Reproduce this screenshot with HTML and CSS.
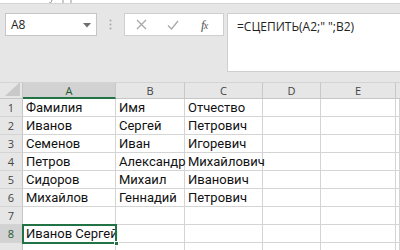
FILE: index.html
```html
<!DOCTYPE html>
<html lang="ru">
<head>
<meta charset="utf-8">
<link rel="stylesheet" href="styles.css">
</head>
<body>
<div class="ribbon-edge">
  <svg width="30" height="4" viewBox="0 0 30 4"><path d="M4 0 L3 2.5 Q2.5 3.2 1 3" stroke="#888" stroke-width="0.9" fill="none"/><path d="M15 0 V3" stroke="#888" stroke-width="0.9"/><path d="M23 0 V3" stroke="#888" stroke-width="0.9"/></svg>
</div>
<div class="formula-bar">
  <div class="namebox">
    <span class="name">A8</span>
    <svg class="caret" width="8" height="5" viewBox="0 0 8 5"><polygon points="0,0 8,0 4,4.5" fill="#6e6e6e"/></svg>
  </div>
  <div class="dots">
    <svg width="3" height="11" viewBox="0 0 3 11"><circle cx="1.5" cy="1.5" r="1" fill="#a8a8a8"/><circle cx="1.5" cy="5.5" r="1" fill="#a8a8a8"/><circle cx="1.5" cy="9.5" r="1" fill="#a8a8a8"/></svg>
  </div>
  <div class="fxbox">
    <svg class="ico" width="11" height="11" viewBox="0 0 11 11"><path d="M1 1 L10 10 M10 1 L1 10" stroke="#a9a9a9" stroke-width="1.3" fill="none"/></svg>
    <svg class="ico" width="12" height="10" viewBox="0 0 12 10"><path d="M1 5.5 L4.5 9 L11 1" stroke="#a9a9a9" stroke-width="1.3" fill="none"/></svg>
    <span class="fx"><i>f</i><i class="x">x</i></span>
  </div>
  <div class="formula">=СЦЕПИТЬ(A2;" ";B2)</div>
</div>
<div class="sheet">
  <div class="corner"><svg width="15" height="14" viewBox="0 0 15 14"><polygon points="15,0 15,14 0,14" fill="#c9c9c9"/></svg></div>
  <div class="ch sel">A</div><div class="ch">B</div><div class="ch">C</div><div class="ch">D</div><div class="ch">E</div><div class="ch last"></div>

  <div class="rh">1</div><div class="c">Фамилия</div><div class="c">Имя</div><div class="c">Отчество</div><div class="c"></div><div class="c"></div><div class="c"></div>
  <div class="rh">2</div><div class="c">Иванов</div><div class="c">Сергей</div><div class="c">Петрович</div><div class="c"></div><div class="c"></div><div class="c"></div>
  <div class="rh">3</div><div class="c">Семенов</div><div class="c">Иван</div><div class="c">Игоревич</div><div class="c"></div><div class="c"></div><div class="c"></div>
  <div class="rh">4</div><div class="c">Петров</div><div class="c">Александр</div><div class="c">Михайлович</div><div class="c"></div><div class="c"></div><div class="c"></div>
  <div class="rh">5</div><div class="c">Сидоров</div><div class="c">Михаил</div><div class="c">Иванович</div><div class="c"></div><div class="c"></div><div class="c"></div>
  <div class="rh">6</div><div class="c">Михайлов</div><div class="c">Геннадий</div><div class="c">Петрович</div><div class="c"></div><div class="c"></div><div class="c"></div>
  <div class="rh">7</div><div class="c"></div><div class="c"></div><div class="c"></div><div class="c"></div><div class="c"></div><div class="c"></div>
  <div class="rh selrow">8</div><div class="c active">Иванов Сергей<span class="handle"></span></div><div class="c"></div><div class="c"></div><div class="c"></div><div class="c"></div><div class="c"></div>
  <div class="rh"></div><div class="c"></div><div class="c"></div><div class="c"></div><div class="c"></div><div class="c"></div><div class="c"></div>
</div>
</body>
</html>
```
FILE: styles.css
```css
* { box-sizing: border-box; }
html, body { margin: 0; padding: 0; }
body {
  width: 400px;
  height: 250px;
  overflow: hidden;
  background: #e6e6e6;
  font-family: Roboto, "Liberation Sans", sans-serif;
}
.ribbon-edge {
  height: 4px;
  background: #ffffff;
  border-bottom: 1px solid #d4d4d4;
  overflow: hidden;
  padding-left: 48px;
  display: flex;
  align-items: flex-start;
}
.formula-bar {
  display: flex;
  align-items: flex-start;
  padding-top: 9px;
  height: 78px;
}
.namebox {
  margin-left: 5px;
  width: 92px;
  height: 23px;
  background: #fff;
  border: 1px solid #c6c6c6;
  display: flex;
  align-items: center;
  padding: 0 5px 0 5px;
  font-family: "Open Sans", sans-serif;
  font-size: 12px;
  color: #222;
}
.namebox .name { flex: 1; }
.caret { margin-top: 1px; }
.dots {
  width: 27px;
  height: 23px;
  display: flex;
  align-items: center;
  justify-content: center;
}
.fxbox {
  width: 100px;
  height: 23px;
  background: #fff;
  border: 1px solid #cfcfcf;
  display: flex;
  align-items: center;
  padding-left: 11px;
}
.fxbox .ico { margin-right: 20px; }
.fxbox .ico + .ico { margin-right: 22px; }
.fx {
  font-family: "Liberation Serif", serif;
  font-size: 13px;
  color: #555;
  letter-spacing: -1px;
}
.fx .x { font-size: 10px; }
.formula {
  flex: 1;
  margin-left: 3px;
  height: 59px;
  background: #fff;
  border: 1px solid #cfcfcf;
  border-right: none;
  padding: 4px 0 0 9px;
  font-family: "Open Sans", sans-serif;
  font-size: 12px;
  color: #222;
  white-space: nowrap;
}
.sheet {
  display: grid;
  grid-template-columns: 23px 93px 69px 78px 58px 75px 4px;
  grid-template-rows: 17px repeat(9, 18px);
  background: #fff;
}
.corner {
  background: #e6e6e6;
  border-right: 1px solid #c6c6c6;
  border-bottom: 1px solid #c6c6c6;
  border-top: 1px solid #d4d4d4;
  display: flex;
  align-items: flex-end;
  justify-content: flex-end;
  padding: 0 2px 2px 0;
}
.ch {
  background: #e6e6e6;
  border-top: 1px solid #d4d4d4;
  border-right: 1px solid #c8c8c8;
  border-bottom: 1px solid #c6c6c6;
  font-family: "Open Sans", sans-serif;
  font-size: 11px;
  color: #444;
  display: flex;
  align-items: center;
  justify-content: center;
}
.ch.sel {
  background: #d2d2d2;
  border-bottom: 2px solid #217346;
  color: #1e5a37;
}
.ch.last { border-right: none; }
.rh {
  background: #e6e6e6;
  border-right: 1px solid #c6c6c6;
  border-bottom: 1px solid #d4d4d4;
  font-family: "Open Sans", sans-serif;
  font-size: 11px;
  color: #444;
  display: flex;
  align-items: center;
  justify-content: center;
}
.rh.selrow {
  background: #d2d2d2;
  color: #1e5a37;
}
.c {
  border-right: 1px solid #d4d4d4;
  border-bottom: 1px solid #d4d4d4;
  font-size: 13px;
  line-height: 17px;
  padding-left: 3px;
  color: #111;
  white-space: nowrap;
  overflow: visible;
  display: flex;
  align-items: flex-end;
}
.c.active {
  position: relative;
  outline: 2px solid #217346;
  outline-offset: -1px;
  z-index: 1;
}
.handle {
  position: absolute;
  right: -4px;
  bottom: -4px;
  width: 5px;
  height: 5px;
  background: #217346;
  border: 1px solid #fff;
}
```
